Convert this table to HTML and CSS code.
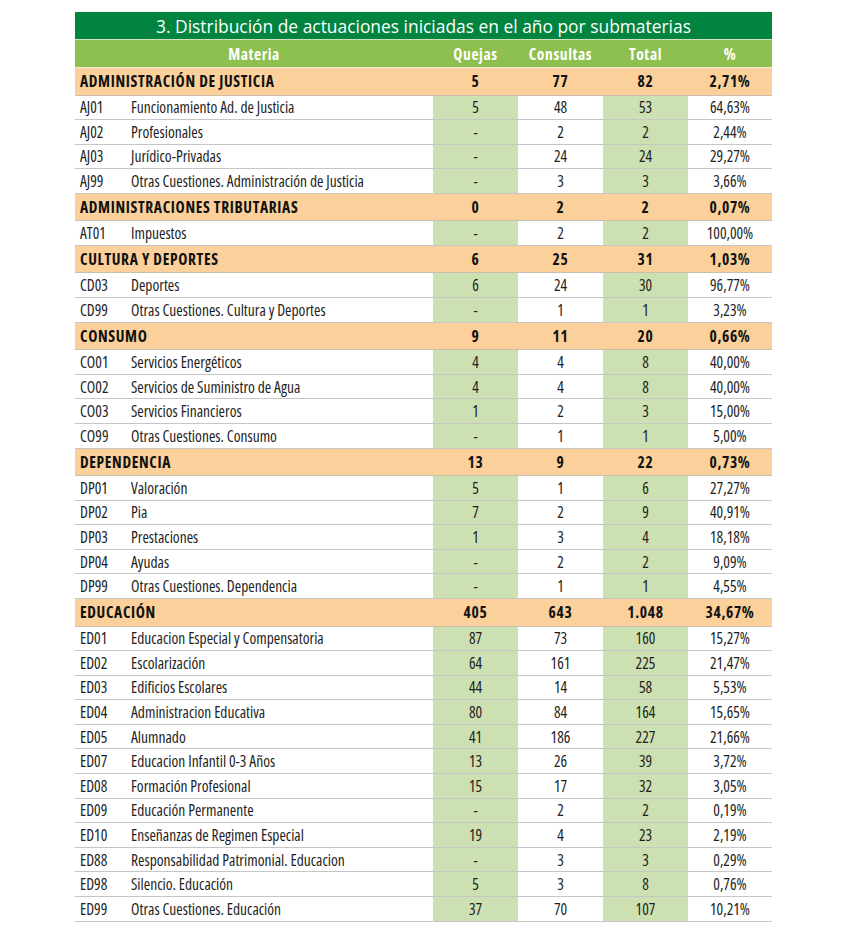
FILE: index.html
```html
<!DOCTYPE html>
<html lang="es">
<head>
<meta charset="utf-8">
<title>Distribución de actuaciones</title>
<link rel="stylesheet" href="styles.css">
</head>
<body>
<div class="wrap">
  <div class="title">3. Distribución de actuaciones iniciadas en el año por submaterias</div>
  <div class="row head">
    <div class="mat">Materia</div><div class="num">Quejas</div><div class="num">Consultas</div><div class="num">Total</div><div class="num">%</div>
  </div>

  <div class="row cat"><div class="mat">ADMINISTRACIÓN DE JUSTICIA</div><div class="num">5</div><div class="num">77</div><div class="num">82</div><div class="num">2,71%</div></div>
  <div class="row item"><div class="mat"><span class="code">AJ01</span><span>Funcionamiento Ad. de Justicia</span></div><div class="num g">5</div><div class="num">48</div><div class="num g">53</div><div class="num">64,63%</div></div>
  <div class="row item"><div class="mat"><span class="code">AJ02</span><span>Profesionales</span></div><div class="num g">-</div><div class="num">2</div><div class="num g">2</div><div class="num">2,44%</div></div>
  <div class="row item"><div class="mat"><span class="code">AJ03</span><span>Jurídico-Privadas</span></div><div class="num g">-</div><div class="num">24</div><div class="num g">24</div><div class="num">29,27%</div></div>
  <div class="row item"><div class="mat"><span class="code">AJ99</span><span>Otras Cuestiones. Administración de Justicia</span></div><div class="num g">-</div><div class="num">3</div><div class="num g">3</div><div class="num">3,66%</div></div>

  <div class="row cat"><div class="mat">ADMINISTRACIONES TRIBUTARIAS</div><div class="num">0</div><div class="num">2</div><div class="num">2</div><div class="num">0,07%</div></div>
  <div class="row item"><div class="mat"><span class="code">AT01</span><span>Impuestos</span></div><div class="num g">-</div><div class="num">2</div><div class="num g">2</div><div class="num">100,00%</div></div>

  <div class="row cat"><div class="mat">CULTURA Y DEPORTES</div><div class="num">6</div><div class="num">25</div><div class="num">31</div><div class="num">1,03%</div></div>
  <div class="row item"><div class="mat"><span class="code">CD03</span><span>Deportes</span></div><div class="num g">6</div><div class="num">24</div><div class="num g">30</div><div class="num">96,77%</div></div>
  <div class="row item"><div class="mat"><span class="code">CD99</span><span>Otras Cuestiones. Cultura y Deportes</span></div><div class="num g">-</div><div class="num">1</div><div class="num g">1</div><div class="num">3,23%</div></div>

  <div class="row cat"><div class="mat">CONSUMO</div><div class="num">9</div><div class="num">11</div><div class="num">20</div><div class="num">0,66%</div></div>
  <div class="row item"><div class="mat"><span class="code">CO01</span><span>Servicios Energéticos</span></div><div class="num g">4</div><div class="num">4</div><div class="num g">8</div><div class="num">40,00%</div></div>
  <div class="row item"><div class="mat"><span class="code">CO02</span><span>Servicios de Suministro de Agua</span></div><div class="num g">4</div><div class="num">4</div><div class="num g">8</div><div class="num">40,00%</div></div>
  <div class="row item"><div class="mat"><span class="code">CO03</span><span>Servicios Financieros</span></div><div class="num g">1</div><div class="num">2</div><div class="num g">3</div><div class="num">15,00%</div></div>
  <div class="row item"><div class="mat"><span class="code">CO99</span><span>Otras Cuestiones. Consumo</span></div><div class="num g">-</div><div class="num">1</div><div class="num g">1</div><div class="num">5,00%</div></div>

  <div class="row cat"><div class="mat">DEPENDENCIA</div><div class="num">13</div><div class="num">9</div><div class="num">22</div><div class="num">0,73%</div></div>
  <div class="row item"><div class="mat"><span class="code">DP01</span><span>Valoración</span></div><div class="num g">5</div><div class="num">1</div><div class="num g">6</div><div class="num">27,27%</div></div>
  <div class="row item"><div class="mat"><span class="code">DP02</span><span>Pia</span></div><div class="num g">7</div><div class="num">2</div><div class="num g">9</div><div class="num">40,91%</div></div>
  <div class="row item"><div class="mat"><span class="code">DP03</span><span>Prestaciones</span></div><div class="num g">1</div><div class="num">3</div><div class="num g">4</div><div class="num">18,18%</div></div>
  <div class="row item"><div class="mat"><span class="code">DP04</span><span>Ayudas</span></div><div class="num g">-</div><div class="num">2</div><div class="num g">2</div><div class="num">9,09%</div></div>
  <div class="row item"><div class="mat"><span class="code">DP99</span><span>Otras Cuestiones. Dependencia</span></div><div class="num g">-</div><div class="num">1</div><div class="num g">1</div><div class="num">4,55%</div></div>

  <div class="row cat"><div class="mat">EDUCACIÓN</div><div class="num">405</div><div class="num">643</div><div class="num">1.048</div><div class="num">34,67%</div></div>
  <div class="row item"><div class="mat"><span class="code">ED01</span><span>Educacion Especial y Compensatoria</span></div><div class="num g">87</div><div class="num">73</div><div class="num g">160</div><div class="num">15,27%</div></div>
  <div class="row item"><div class="mat"><span class="code">ED02</span><span>Escolarización</span></div><div class="num g">64</div><div class="num">161</div><div class="num g">225</div><div class="num">21,47%</div></div>
  <div class="row item"><div class="mat"><span class="code">ED03</span><span>Edificios Escolares</span></div><div class="num g">44</div><div class="num">14</div><div class="num g">58</div><div class="num">5,53%</div></div>
  <div class="row item"><div class="mat"><span class="code">ED04</span><span>Administracion Educativa</span></div><div class="num g">80</div><div class="num">84</div><div class="num g">164</div><div class="num">15,65%</div></div>
  <div class="row item"><div class="mat"><span class="code">ED05</span><span>Alumnado</span></div><div class="num g">41</div><div class="num">186</div><div class="num g">227</div><div class="num">21,66%</div></div>
  <div class="row item"><div class="mat"><span class="code">ED07</span><span>Educacion Infantil 0-3 Años</span></div><div class="num g">13</div><div class="num">26</div><div class="num g">39</div><div class="num">3,72%</div></div>
  <div class="row item"><div class="mat"><span class="code">ED08</span><span>Formación Profesional</span></div><div class="num g">15</div><div class="num">17</div><div class="num g">32</div><div class="num">3,05%</div></div>
  <div class="row item"><div class="mat"><span class="code">ED09</span><span>Educación Permanente</span></div><div class="num g">-</div><div class="num">2</div><div class="num g">2</div><div class="num">0,19%</div></div>
  <div class="row item"><div class="mat"><span class="code">ED10</span><span>Enseñanzas de Regimen Especial</span></div><div class="num g">19</div><div class="num">4</div><div class="num g">23</div><div class="num">2,19%</div></div>
  <div class="row item"><div class="mat"><span class="code">ED88</span><span>Responsabilidad Patrimonial. Educacion</span></div><div class="num g">-</div><div class="num">3</div><div class="num g">3</div><div class="num">0,29%</div></div>
  <div class="row item"><div class="mat"><span class="code">ED98</span><span>Silencio. Educación</span></div><div class="num g">5</div><div class="num">3</div><div class="num g">8</div><div class="num">0,76%</div></div>
  <div class="row item"><div class="mat"><span class="code">ED99</span><span>Otras Cuestiones. Educación</span></div><div class="num g">37</div><div class="num">70</div><div class="num g">107</div><div class="num">10,21%</div></div>
</div>
</body>
</html>
```
FILE: styles.css
```css
html, body {
  margin: 0;
  padding: 0;
  background: #ffffff;
}

body {
  font-family: "Open Sans", "Roboto Condensed", sans-serif;
  font-stretch: 75%;
  font-size: 15.5px;
  color: #1e1e1e;
}

.wrap {
  width: 697px;
  margin: 12px 0 0 75px;
}

.title {
  box-sizing: border-box;
  height: 28px;
  background: #00843f;
  color: #ffffff;
  font-stretch: 100%;
  font-weight: 500;
  font-size: 17.4px;
  line-height: 28px;
  text-align: center;
  border-bottom: 1px solid #cfe3bf;
}

.row {
  display: grid;
  grid-template-columns: 358px 85px 85px 85px 84px;
  box-sizing: border-box;
  align-items: stretch;
}

.row > div {
  display: flex;
  align-items: center;
}

.num {
  justify-content: center;
}

.head {
  height: 28px;
  background: #8dc04e;
  color: #ffffff;
  font-weight: 700;
  letter-spacing: 0.6px;
  border-bottom: 1px solid #f4e8d6;
}

.head .mat {
  justify-content: center;
}

.cat {
  height: 27.5px;
  background: #fbd09a;
  color: #111111;
  font-weight: 700;
  letter-spacing: 0.65px;
  border-bottom: 1px solid #c9bfae;
}

.cat .mat {
  padding-left: 5px;
}

.item {
  height: 24.6px;
  background: #ffffff;
  border-bottom: 1.5px solid #c6c6c6;
}

.item .mat {
  padding-left: 5px;
}

.code {
  display: inline-block;
  width: 51px;
}

.g {
  background: #cde0b1;
}
```
